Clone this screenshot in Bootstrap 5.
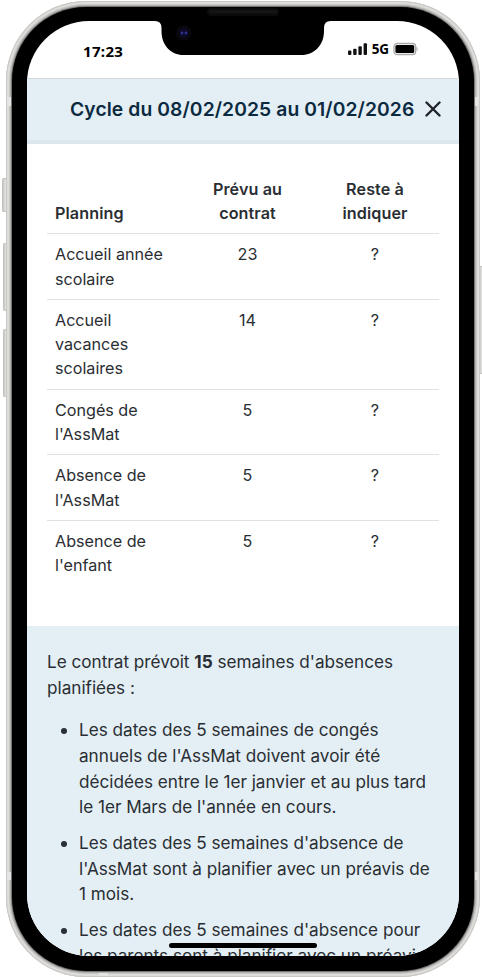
<!DOCTYPE html>
<html lang="fr">
<head>
<meta charset="utf-8">
<meta name="viewport" content="width=device-width, initial-scale=1">
<title>Cycle du 08/02/2025 au 01/02/2026</title>
<link href="https://cdn.jsdelivr.net/npm/bootstrap@5.3.0/dist/css/bootstrap.min.css" rel="stylesheet">
<style>
html,body{height:977px;overflow:hidden}
body{font-family:Inter,sans-serif;background:#fff;color:#2a2e33}
.stage{width:482px;height:977px}
.side-key{background:linear-gradient(90deg,#c4c4c2,#e2e2e0 45%,#cccccb);border-radius:2px 0 0 2px;border:1px solid #c2c2c0;border-right:0}
.key-mute{left:2px;top:178px;width:6px;height:34px}
.key-up{left:3px;top:243px;width:5px;height:68px}
.key-down{left:3px;top:329px;width:5px;height:68px}
.key-power{left:479px;top:266px;width:4px;height:108px}
.phone-rim{margin:1px 2px 0 6px;width:474px;height:976px;padding:6px;border-radius:80px;background:#d3d2cf;box-shadow:inset 0 0 0 1px #c9c8c5,inset 0 0 0 3px #dedddb,inset 0 0 0 4px #cfcecb}
.phone-bezel{height:964px;padding:14px 15px 15px;border-radius:74px;background:#000;box-shadow:0 0 2px 1px #555}
.phone-screen{width:432px;height:935px;border-radius:62px;background:#fff}
.band{background:#e6e5e3}
.band-a{left:7px;top:97px;width:4px;height:9px}
.band-b{left:475px;top:97px;width:4px;height:9px}
.band-c{left:7px;top:872px;width:4px;height:8px}
.band-d{left:475px;top:872px;width:4px;height:8px}
.band-e{left:99px;top:973px;width:9px;height:3px}
.notch{left:154px;top:7px}
.status{height:57px;padding:16px 40px 0 56px;font-family:"Noto Sans",sans-serif;font-weight:700;color:#000}
.clock{font-size:15px;line-height:28px;letter-spacing:.35px}
.net{font-size:13.5px;line-height:24px;letter-spacing:-.1px}
.cycle-head{height:66px;background:#e3eef5;border-top:1px solid #d3dadf;border-bottom:4px solid #dbe6ed;padding:0 18px 2px 43px}
.cycle-title{font:600 19.3px/26px Inter,sans-serif;letter-spacing:.08px;color:#0b2a40;white-space:nowrap}
.plan{padding:24.7px 20px 0 20px;height:482px}
.plan .table{font-size:16.15px;line-height:24.3px;width:392px;table-layout:fixed;--bs-table-bg:transparent;--bs-table-color:#2a2e33;color:#2a2e33}
.plan th{font-weight:600;letter-spacing:.1px}
.plan .table>:not(caption)>*>*{padding:8px;border-color:#dee2e6}
.plan tbody tr:last-child td{border-bottom:0}
.info{background:#e3eef5;height:340px;padding:23.3px 20px 0;font-size:17.15px;line-height:25.7px}
.info p{margin-bottom:16.400px}
.info li{margin-bottom:10px}
.info ul{padding-left:32px}
.home-bar{left:169px;top:943px;width:148px;height:5px;border-radius:3px;background:#000}
</style>
<script src="https://cdn.jsdelivr.net/npm/bootstrap@5.3.0/dist/js/bootstrap.bundle.min.js"></script>
</head>
<body>
<div class="stage position-relative overflow-hidden d-flex">
  <span class="side-key key-mute position-absolute"></span>
  <span class="side-key key-up position-absolute"></span>
  <span class="side-key key-down position-absolute"></span>
  <span class="side-key key-power position-absolute"></span>
  <div class="phone-rim position-relative flex-shrink-0">
    <div class="phone-bezel">
      <main class="phone-screen overflow-hidden d-flex flex-column">
        <div class="status d-flex justify-content-between align-items-start flex-shrink-0">
          <span class="clock">17:23</span>
          <span class="d-flex align-items-center">
            <svg width="20" height="14" viewBox="0 0 20 14" fill="#111"><rect x="0" y="8.5" width="3.4" height="4.5" rx="1"/><rect x="5.2" y="6.8" width="3.4" height="6.2" rx="1"/><rect x="10.4" y="4.3" width="3.4" height="8.7" rx="1"/><rect x="15.6" y="1.3" width="3.4" height="11.7" rx="1"/></svg>
            <span class="net px-1">5G</span>
            <svg width="26" height="14" viewBox="0 0 26 14"><rect x="1" y="1.5" width="21.6" height="11" rx="3" fill="#fff" stroke="#aaa" stroke-width="1.3"/><rect x="2.4" y="3" width="18.8" height="8" rx="1.5" fill="#000"/><path d="M23.5 4.5q2.5 2.5 0 5z" fill="#aaa"/></svg>
          </span>
        </div>
        <header class="cycle-head d-flex align-items-center justify-content-between flex-shrink-0">
          <h1 class="cycle-title m-0">Cycle du 08/02/2025 au 01/02/2026</h1>
          <svg class="flex-shrink-0" width="16" height="16" viewBox="0 0 16 16" fill="none" stroke="#212529" stroke-width="2.4" stroke-linecap="round"><path d="M1.5 1.5 14.5 14.5M14.5 1.5 1.5 14.5"/></svg>
        </header>
        <section class="plan flex-shrink-0">
          <table class="table mb-0">
            <colgroup><col style="width:137px"><col style="width:127px"><col style="width:128px"></colgroup>
            <thead><tr><th class="align-bottom">Planning</th><th class="text-center">Prévu au contrat</th><th class="text-center">Reste à indiquer</th></tr></thead>
            <tbody>
              <tr><td>Accueil année scolaire</td><td class="text-center">23</td><td class="text-center">?</td></tr>
              <tr><td>Accueil vacances scolaires</td><td class="text-center">14</td><td class="text-center">?</td></tr>
              <tr><td>Congés de l'AssMat</td><td class="text-center">5</td><td class="text-center">?</td></tr>
              <tr><td>Absence de l'AssMat</td><td class="text-center">5</td><td class="text-center">?</td></tr>
              <tr><td>Absence de l'enfant</td><td class="text-center">5</td><td class="text-center">?</td></tr>
            </tbody>
          </table>
        </section>
        <section class="info flex-shrink-0">
          <p>Le contrat prévoit <strong>15</strong> semaines d'absences planifiées :</p>
          <ul class="mb-0">
            <li>Les dates des 5 semaines de congés annuels de l'AssMat doivent avoir été décidées entre le 1er janvier et au plus tard le 1er Mars de l'année en cours.</li>
            <li>Les dates des 5 semaines d'absence de l'AssMat sont à planifier avec un préavis de 1&nbsp;mois.</li>
            <li>Les dates des 5 semaines d'absence pour les parents sont à planifier avec un préavis</li>
          </ul>
        </section>
      </main>
    </div>
  </div>
  <svg class="notch position-absolute" width="178" height="50" viewBox="154 7 178 50"><path d="M155 20v1q6.500 0 6.500 7v3c0 14 9 24 22 24h118c13 0 22.500-10 22.500-24v-3q0-7 6.500-7v-1z" fill="#000"/><rect x="207" y="8" width="72" height="8" rx="4" fill="#0b0b0c"/><rect x="209" y="10" width="68" height="3.500" rx="1.700" fill="#151517"/><circle cx="183.700" cy="33" r="7.800" fill="#09070d"/><circle cx="183.700" cy="33" r="4.800" fill="#0c0a25"/><circle cx="182" cy="33" r="1.400" fill="#2c3190"/><circle cx="186" cy="33" r="1.400" fill="#2c3190"/></svg>
  <span class="band band-a position-absolute"></span><span class="band band-b position-absolute"></span>
  <span class="band band-c position-absolute"></span><span class="band band-d position-absolute"></span>
  <span class="band band-e position-absolute"></span>
  <span class="home-bar position-absolute"></span>
</div>
</body>
</html>
